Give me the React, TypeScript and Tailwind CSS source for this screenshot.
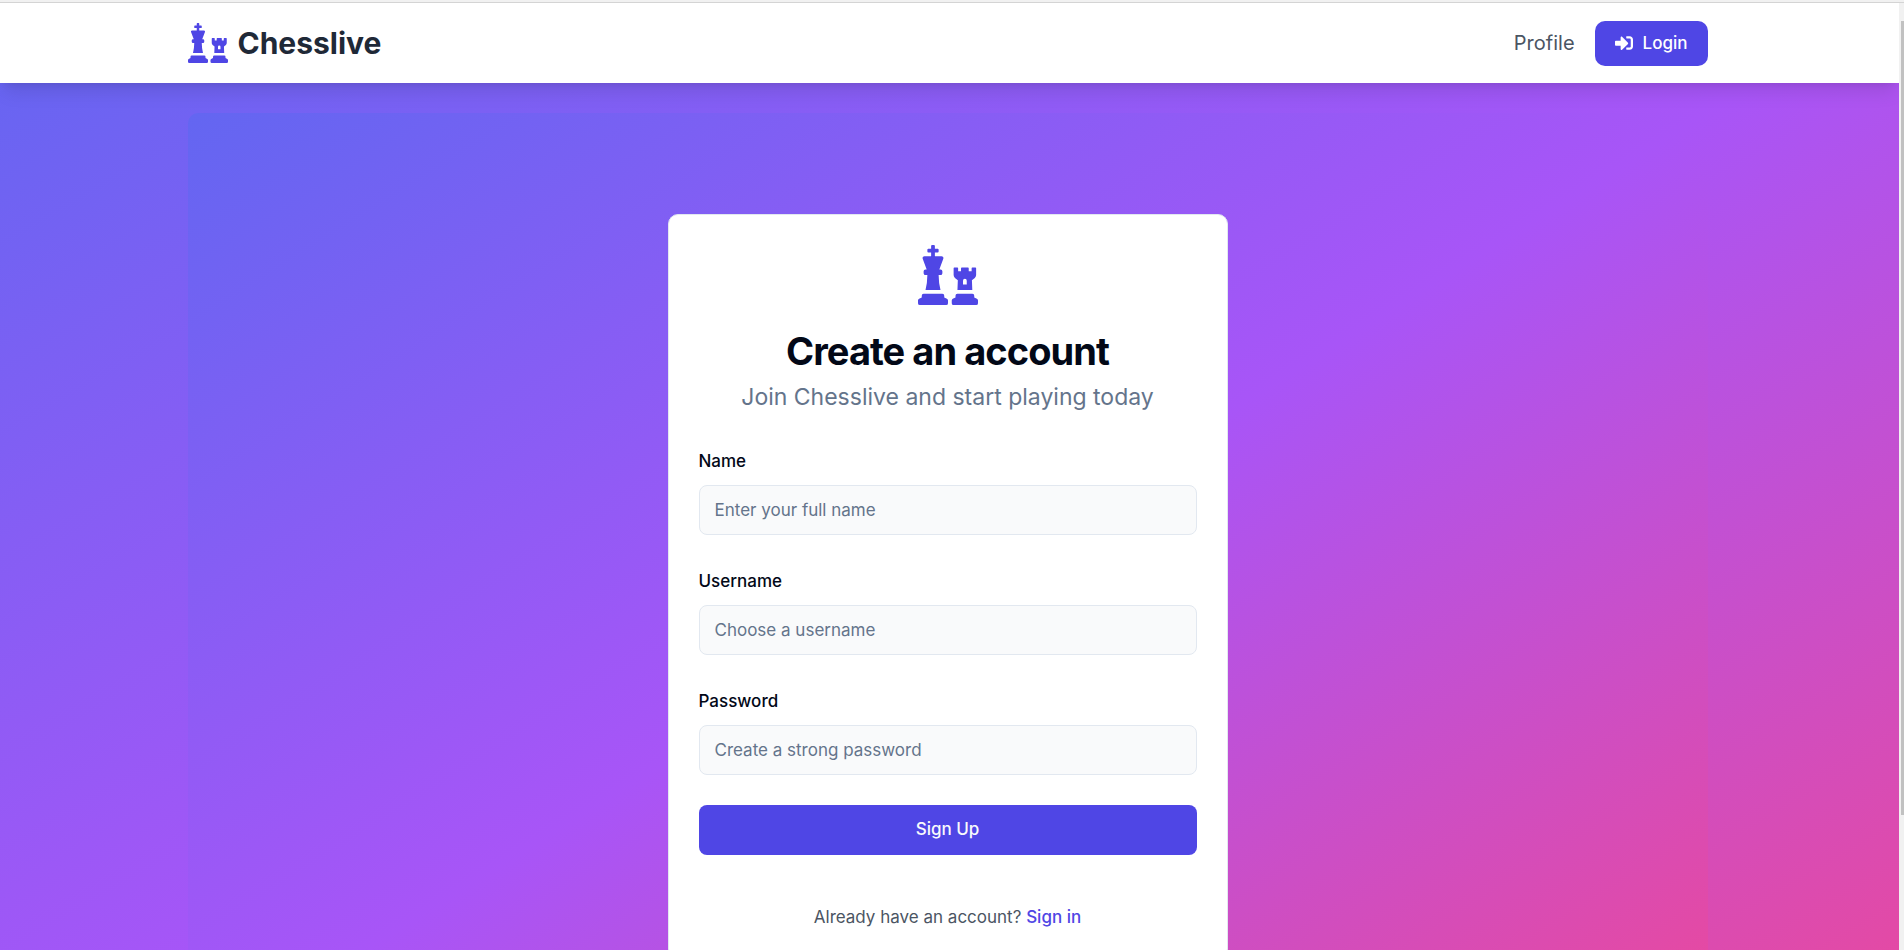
import { FaChess, FaSignInAlt } from "react-icons/fa";

type Field = {
  id: string;
  label: string;
  placeholder: string;
  type: string;
};

const fields: Field[] = [
  { id: "name", label: "Name", placeholder: "Enter your full name", type: "text" },
  { id: "username", label: "Username", placeholder: "Choose a username", type: "text" },
  { id: "password", label: "Password", placeholder: "Create a strong password", type: "password" },
];

function Navbar() {
  return (
    <nav className="relative bg-white pr-1 shadow-[0_12px_18px_-4px_rgba(0,0,0,0.1),0_5px_8px_-5px_rgba(0,0,0,0.1)]">
      <div className="mx-auto flex h-20 max-w-[1600px] items-center justify-between px-10">
        <a href="#home" className="flex items-center gap-2.5">
          <FaChess className="size-10 text-[#4f46e5]" aria-hidden="true" />
          <span className="text-[30px] leading-10 font-bold text-[#1f2937]">Chesslive</span>
        </a>
        <div className="flex items-center gap-5">
          <a href="#profile" className="text-xl leading-8 text-[#4b5563]">
            Profile
          </a>
          <button
            type="button"
            className="flex items-center gap-2.5 rounded-[10px] bg-[#4f46e5] px-5 py-2.5 text-[17px] leading-[25px] font-medium text-white"
          >
            <FaSignInAlt className="size-[18px]" aria-hidden="true" />
            Login
          </button>
        </div>
      </div>
    </nav>
  );
}

function SignUpCard() {
  return (
    <section className="w-full max-w-[560px] rounded-[10px] border border-[#e2e8f0] bg-white px-[30px] pt-[30px] pb-7 text-[#020817]">
      <header className="flex flex-col items-center text-center">
        <FaChess className="size-[60px] text-[#4f46e5]" aria-hidden="true" />
        <h1 className="mt-6 text-[38px] leading-[45px] font-bold tracking-tight">Create an account</h1>
        <p className="mt-[5px] text-[23px] leading-9 text-[#64748b]">Join Chesslive and start playing today</p>
      </header>
      <form className="mt-[30px] flex flex-col gap-[30px]" onSubmit={(e) => e.preventDefault()}>
        {fields.map((f) => (
          <div key={f.id} className="flex flex-col gap-2">
            <label htmlFor={f.id} className="text-[17px] leading-8 font-medium">
              {f.label}
            </label>
            <input
              id={f.id}
              type={f.type}
              placeholder={f.placeholder}
              className="h-[50px] w-full rounded-lg border border-[#e2e8f0] bg-[#f9fafb] px-[15px] text-[17px] placeholder:text-[#64748b]"
            />
          </div>
        ))}
        <button
          type="submit"
          className="h-[50px] w-full rounded-lg bg-[#4f46e5] text-[17px] font-medium text-[#f8fafc]"
        >
          Sign Up
        </button>
      </form>
      <p className="mt-[50px] text-center text-[17px] leading-[25px] text-[#4b5563]">
        Already have an account?{" "}
        <a href="#signin" className="font-medium text-[#4f46e5]">
          Sign in
        </a>
      </p>
    </section>
  );
}

export default function App() {
  return (
    <div className="flex h-screen flex-col font-['Inter',sans-serif]">
      <div className="h-[3px] shrink-0 border-b border-[#d4d4d4] bg-[#f1f1f1]" />
      <div className="flex min-h-0 flex-1">
        <div className="min-w-0 flex-1 overflow-y-auto [scrollbar-width:none]">
          <div className="bg-linear-to-br/srgb from-[#6366f1] via-[#a855f7] to-[#ec4899]">
            <Navbar />
            <div className="pr-1">
              <main className="mx-auto max-w-[1600px] px-10 py-[30px]">
                <div className="flex min-h-[calc(100vh-3px)] items-center justify-center rounded-[10px] bg-linear-to-br/srgb from-[#6366f1] via-[#a855f7] to-[#ec4899]">
                  <SignUpCard />
                </div>
              </main>
            </div>
          </div>
        </div>
        <div className="flex w-[5px] shrink-0 flex-col bg-[#f1f1f1] pt-[18px] pb-4 pl-0.5" aria-hidden="true">
          <div className="h-[87%] bg-[#c1c1c1]" />
        </div>
      </div>
    </div>
  );
}
